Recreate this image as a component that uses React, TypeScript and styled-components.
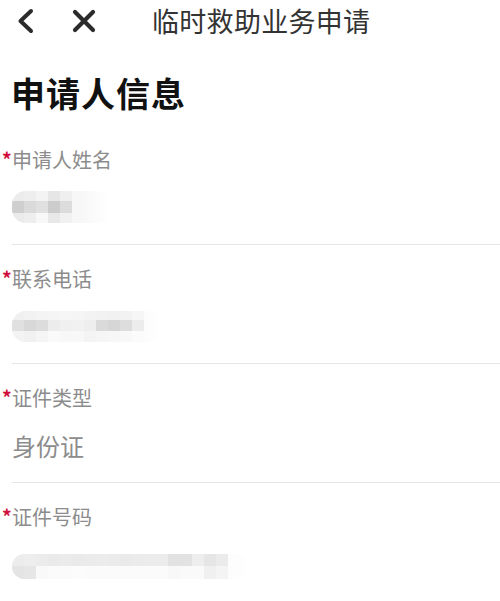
import React from 'react';
import styled, { createGlobalStyle } from 'styled-components';

const GlobalStyle = createGlobalStyle`
  html, body {
    margin: 0;
    padding: 0;
    background: #ffffff;
  }
  body {
    font-family: 'Noto Sans CJK SC', 'Noto Sans', sans-serif;
    overflow: hidden;
  }
`;

const Page = styled.div`
  width: 500px;
  height: 601px;
  overflow: hidden;
  background: #fff;
`;

const Header = styled.div`
  height: 42px;
  display: flex;
  align-items: center;
  padding-left: 14px;
`;

const IconButton = styled.div`
  width: 26px;
  height: 26px;
  display: flex;
  color: #2b2b2b;
  & + & {
    margin-left: 31px;
  }
`;

const HeaderTitle = styled.div`
  margin-left: 55px;
  font-size: 27px;
  line-height: 42px;
  color: #333;
  letter-spacing: 0.3px;
`;

const SectionTitle = styled.h1`
  margin: 0;
  padding: 26px 0 0 11px;
  height: 58px;
  font-size: 34px;
  line-height: 50px;
  font-weight: 700;
  color: #111;
  letter-spacing: 1px;
`;

const List = styled.div`
  margin-left: 12px;
`;

const Field = styled.div`
  padding-top: 22px;
  border-bottom: 1px solid #e6e6e6;
`;

const Label = styled.div`
  display: flex;
  align-items: center;
  margin-left: -11px;
  height: 24px;
  font-size: 20px;
  line-height: 24px;
  color: #8c8c8c;
`;

const Star = styled.span`
  width: 11px;
  padding-left: 1px;
  box-sizing: border-box;
  color: #d0103a;
  font-size: 19px;
  font-weight: 700;
  line-height: 16px;
  margin-top: -2px;
`;

const Value = styled.div`
  height: 72px;
  display: flex;
  align-items: center;
  font-size: 24px;
  color: #8c8c8c;
  padding-bottom: 2px;
  box-sizing: border-box;
`;

const Mosaic = styled.div<{ $width: number; $offset: number }>`
  width: ${(p) => p.$width}px;
  margin-top: ${(p) => p.$offset}px;
  border-radius: 14px;
  background: linear-gradient(90deg, #f4f4f4 0%, #f7f7f7 70%, #ffffff 100%);
  overflow: hidden;
  display: flex;
  flex-direction: column;
  filter: blur(0.6px);
`;

const MosaicRow = styled.div<{ $h: number }>`
  display: flex;
  height: ${(p) => p.$h}px;
`;

const Cell = styled.div<{ $c: string; $w: number }>`
  width: ${(p) => p.$w}px;
  flex-shrink: 0;
  background: ${(p) => p.$c};
`;

type MosaicData = { width: number; offset: number; cellW: number; rows: { h: number; cells: string[] }[] };

const nameMosaic: MosaicData = {
  width: 98,
  offset: 0,
  cellW: 12,
  rows: [
    { h: 10, cells: ['#ececec', '#eeeeee', '#f3f3f3', '#e6e6e6', '#efefef'] },
    { h: 12, cells: ['#cfcfcf', '#dadada', '#e0e0e0', '#cccccc', '#dcdcdc'] },
    { h: 10, cells: ['#ebebeb', '#eeeeee', '#f8f8f8', '#e8e8e8', '#f1f1f1'] },
  ],
};

const phoneMosaic: MosaicData = {
  width: 150,
  offset: 0,
  cellW: 12,
  rows: [
    { h: 9, cells: ['#f0f0f0', '#f2f2f2', '#f4f4f4', '#f5f5f5', '#f6f6f6', '#f5f5f5', '#f3f3f3', '#f2f2f2', '#f1f1f1', '#f2f2f2', '#f6f6f6'] },
    { h: 11, cells: ['#e0e0e0', '#d8d8d8', '#dcdcdc', '#ececec', '#f0f0f0', '#f1f1f1', '#eeeeee', '#dadada', '#d6d6d6', '#dddddd', '#ececec'] },
    { h: 11, cells: ['#f3f3f3', '#f1f1f1', '#f5f5f5', '#fafafa', '#f8f8f8', '#f8f8f8', '#f4f4f4', '#f6f6f6', '#f7f7f7', '#f8f8f8', '#fbfbfb'] },
  ],
};

const idMosaic: MosaicData = {
  width: 240,
  offset: 4,
  cellW: 12,
  rows: [
    {
      h: 12,
      cells: ['#ececec', '#eeeeee', '#ececec', '#eaeaea', '#ebebeb', '#eaeaea', '#ebebeb', '#ececec', '#ebebeb', '#eaeaea', '#ebebeb', '#ececec', '#ececec', '#e2e2e2', '#e2e2e2', '#eeeeee', '#e6e6e6', '#ebebeb'],
    },
    {
      h: 13,
      cells: ['#e4e4e4', '#e6e6e6', '#f9f9f9', '#fbfbfb', '#fbfbfb', '#fcfcfc', '#fbfbfb', '#fbfbfb', '#fbfbfb', '#fbfbfb', '#fbfbfb', '#fbfbfb', '#fbfbfb', '#f8f8f8', '#fafafa', '#fafafa', '#f0f0f0', '#f4f4f4'],
    },
  ],
};

const Blurred = ({ data }: { data: MosaicData }) => (
  <Mosaic $width={data.width} $offset={data.offset}>
    {data.rows.map((row, i) => (
      <MosaicRow key={i} $h={row.h}>
        {row.cells.map((c, j) => (
          <Cell key={j} $c={c} $w={data.cellW} />
        ))}
      </MosaicRow>
    ))}
  </Mosaic>
);

const BackIcon = () => (
  <svg width="26" height="26" viewBox="0 0 26 26" fill="none">
    <path d="M17 3 L6.5 13 L17 23" stroke="currentColor" strokeWidth="4" strokeLinecap="round" strokeLinejoin="round" />
  </svg>
);

const CloseIcon = () => (
  <svg width="26" height="26" viewBox="0 0 26 26" fill="none">
    <path d="M4 4 L22 22 M22 4 L4 22" stroke="currentColor" strokeWidth="4.2" strokeLinecap="round" />
  </svg>
);

const fields: { label: string; text?: string; mosaic?: MosaicData }[] = [
  { label: '申请人姓名', mosaic: nameMosaic },
  { label: '联系电话', mosaic: phoneMosaic },
  { label: '证件类型', text: '身份证' },
  { label: '证件号码', mosaic: idMosaic },
];

export default function App() {
  return (
    <Page>
      <GlobalStyle />
      <Header>
        <IconButton>
          <BackIcon />
        </IconButton>
        <IconButton>
          <CloseIcon />
        </IconButton>
        <HeaderTitle>临时救助业务申请</HeaderTitle>
      </Header>
      <SectionTitle>申请人信息</SectionTitle>
      <List>
        {fields.map((f) => (
          <Field key={f.label}>
            <Label>
              <Star>*</Star>
              {f.label}
            </Label>
            <Value>{f.mosaic ? <Blurred data={f.mosaic} /> : f.text}</Value>
          </Field>
        ))}
      </List>
    </Page>
  );
}
